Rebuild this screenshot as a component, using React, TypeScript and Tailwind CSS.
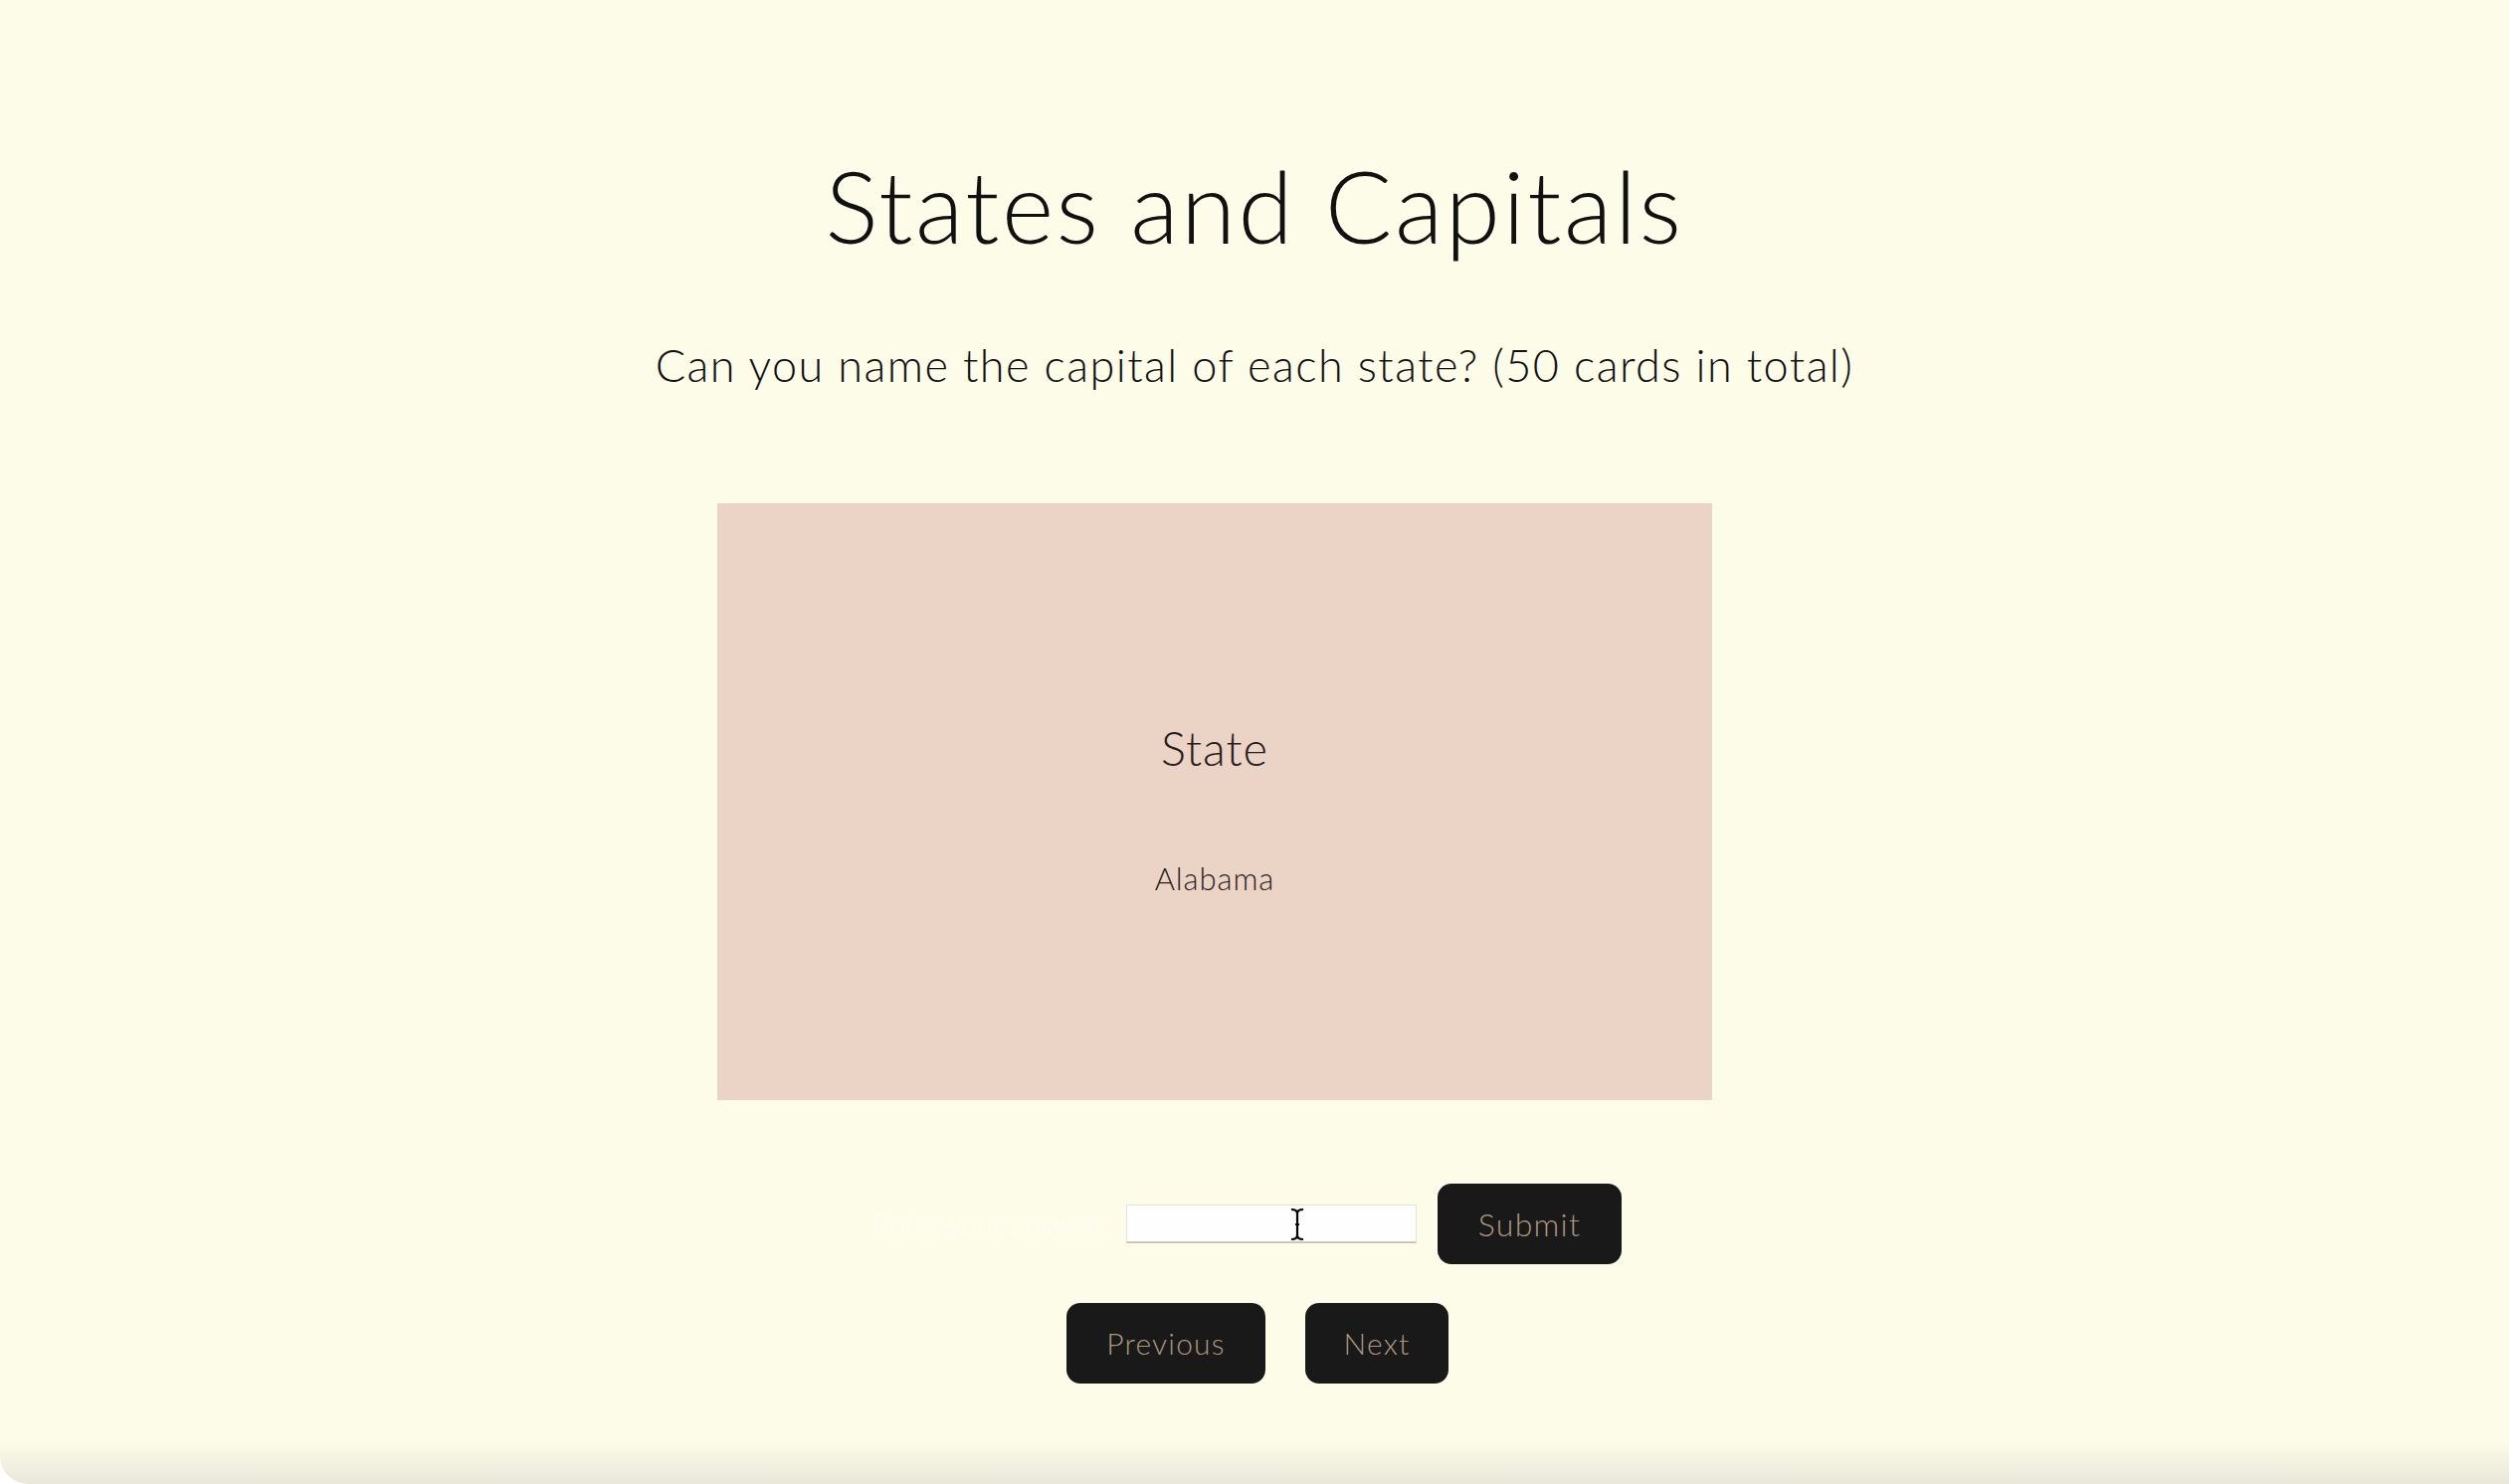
import { useState } from "react";

const cards = [
  { state: "Alabama", capital: "Montgomery" },
  { state: "Alaska", capital: "Juneau" },
  { state: "Arizona", capital: "Phoenix" },
];

export default function App() {
  const [index, setIndex] = useState(0);
  const [answer, setAnswer] = useState("");
  const card = cards[index];

  return (
    <div className="min-h-screen w-full bg-[linear-gradient(to_bottom,#fdfce9_0px,#fdfce9_1450px,#e8e7da_1492px)] rounded-bl-[28px] font-['Lato','Liberation_Sans',sans-serif] font-light text-[#111]">
      <div className="flex flex-col items-center pt-[156px]">
        <h1 className="text-[100px] leading-none tracking-[0.025em]">States and Capitals</h1>
        <p className="mt-[89px] text-[45px] leading-none tracking-[0.032em]">
          Can you name the capital of each state? (50 cards in total)
        </p>

        <div className="mt-[116px] mr-[80px] w-[1000px] h-[600px] bg-[#ebd4c5] flex flex-col items-center justify-center gap-[92px] text-[#2a1c1c] pt-[16px]">
          <div className="text-[47px] leading-none tracking-[0.02em]">State</div>
          <div className="text-[31px] leading-none tracking-[0.03em]">{card.state}</div>
        </div>

        <div className="mt-[84px] ml-[-14px] flex items-center">
          <label htmlFor="answer" className="w-[247px] text-[29px] text-[#fffef5]">
            Enter your answer:
          </label>
          <div className="relative ml-[7px]">
            <input
              id="answer"
              value={answer}
              onChange={(e) => setAnswer(e.target.value)}
              className="w-[292px] h-[39px] bg-[#fefefe] border border-[#e7e4d2] border-b-2 border-b-[#c9c7bc] outline-none px-2 text-[20px]"
            />
            <svg className="absolute left-[164px] top-[3px] pointer-events-none" width="16" height="34" viewBox="0 0 16 34">
              <path d="M2 2 Q8 2 8 6 Q8 2 14 2 M8 6 V28 M2 32 Q8 32 8 28 Q8 32 14 32 M6 17 H10" stroke="#000" strokeWidth="2.2" fill="none" />
            </svg>
          </div>
          <button className="ml-[21px] w-[185px] h-[81px] rounded-[14px] bg-[#191919] text-[#ad977f] text-[32px] tracking-[0.04em]">
            Submit
          </button>
        </div>

        <div className="mt-[39px] ml-[6px] flex items-center gap-[40px]">
          <button
            onClick={() => setIndex((i) => Math.max(0, i - 1))}
            className="w-[200px] h-[81px] rounded-[14px] bg-[#191919] text-[#ad977f] text-[30px] tracking-[0.04em]"
          >
            Previous
          </button>
          <button
            onClick={() => setIndex((i) => Math.min(cards.length - 1, i + 1))}
            className="w-[144px] h-[81px] rounded-[14px] bg-[#191919] text-[#ad977f] text-[30px] tracking-[0.04em]"
          >
            Next
          </button>
        </div>
      </div>
    </div>
  );
}
